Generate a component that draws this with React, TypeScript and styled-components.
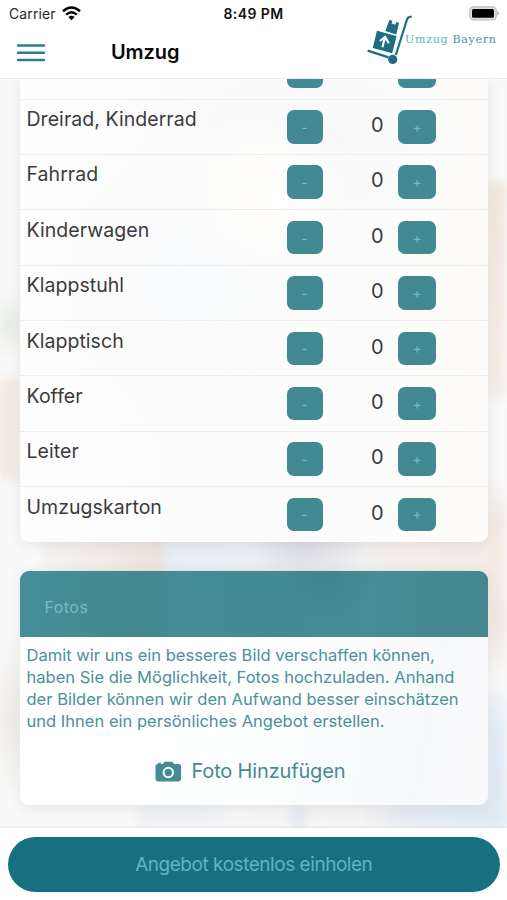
import React from "react";
import styled, { createGlobalStyle } from "styled-components";

const GlobalStyle = createGlobalStyle`
  * { box-sizing: border-box; }
  html, body { margin: 0; padding: 0; }
  body { font-family: Inter, "Liberation Sans", sans-serif; background: #fff; overflow: hidden; }
  button { font-family: inherit; border: 0; padding: 0; margin: 0; cursor: pointer; }
`;

const Screen = styled.div`
  width: 507px;
  height: 900px;
  display: flex;
  flex-direction: column;
  overflow: hidden;
  background: #fff;
`;

const Header = styled.header`
  height: 79px;
  flex: none;
  display: grid;
  grid-template-columns: 1fr auto;
  grid-template-rows: 27px 51px;
  border-bottom: 1px solid #ececec;
  background: #fff;
  position: relative;
  z-index: 1;
`;

const StatusBar = styled.div`
  grid-column: 1 / -1;
  display: grid;
  grid-template-columns: 1fr auto 1fr;
  align-items: center;
  padding: 0 7px 0 9px;
  color: #111;
`;

const Carrier = styled.div`
  display: flex;
  align-items: center;
  gap: 6px;
  font-size: 14px;
  letter-spacing: 0.1px;
  color: #2b2b2b;
`;

const Clock = styled.div`
  margin-left: -2px;
  font-size: 14px;
  font-weight: 600;
  letter-spacing: 0.4px;
`;

const BatterySlot = styled.div`
  display: flex;
  justify-content: flex-end;
`;

const NavLeft = styled.div`
  display: flex;
  align-items: center;
  padding-left: 16px;
`;

const MenuButton = styled.button`
  display: flex;
  background: none;
`;

const Title = styled.h1`
  margin: 0 0 2px 65px;
  font-size: 20px;
  font-weight: 600;
  letter-spacing: -0.1px;
  color: #080808;
`;

const Brand = styled.div`
  display: flex;
  align-items: flex-start;
  width: 141px;
  margin-top: -17px;
`;

const BrandMark = styled.svg`
  flex: none;
`;

const BrandName = styled.div`
  margin: 23px 0 0 -9px;
  font-family: "DejaVu Serif", serif;
  font-size: 11px;
  letter-spacing: 0.72px;
  white-space: nowrap;
  color: #4596a3;
`;

const BrandAccent = styled.span`
  color: #55b9d0;
`;

const Content = styled.main`
  flex: 1;
  min-height: 0;
  overflow: hidden;
  padding: 0 20px;
  position: relative;
  isolation: isolate;
  background: #f9f9f9;

  &::before {
    content: "";
    position: absolute;
    inset: 0;
    z-index: -1;
    filter: blur(4px);
    background:
      radial-gradient(ellipse 40px 34px at 0px 246px, rgba(222, 231, 214, 0.7) 0 5%, transparent),
      linear-gradient(90deg, #f2e6dc, #f5efea) 0 299px / 21px 102px no-repeat,
      linear-gradient(180deg, #f1e8df, #f5eee8) 487px 103px / 20px 215px no-repeat,
      radial-gradient(ellipse 62px 52px at 305px 462px, #dcdce3 10%, transparent),
      linear-gradient(90deg, #f5f3f1, #f2ebe6 50%, #eee2dc 95%) 42px 455px / 122px 67px no-repeat,
      linear-gradient(100deg, #e5edf4, #f0f1f5 45%, #f4ede8 75%, #f5ebe5) 164px 455px / 343px 67px no-repeat,
      linear-gradient(180deg, transparent, #f3e9e4 20%, #f2e8e3 75%, transparent) 487px 400px / 20px 200px no-repeat,
      linear-gradient(180deg, transparent, #e2ebf4 35%, #dfeaf3) 487px 600px / 20px 149px no-repeat,
      radial-gradient(ellipse 12px 30px at 299px 742px, #dfe6f0 20%, transparent),
      linear-gradient(90deg, #eef0f4, #f1f3f6 22%, #f7f6f5 25%, #f6f4f3 60%, #e7eaf0 70%, #dfeaf2) 138px 722px / 369px 40px no-repeat,
      linear-gradient(180deg, transparent, #edebe7 50%, transparent) 0 565px / 21px 150px no-repeat;
  }
`;

const cardShadow = "0 2px 14px rgba(80, 80, 80, 0.12)";

const ItemCard = styled.section`
  width: 467.5px;
  height: 463px;
  overflow: hidden;
  border-radius: 0 0 9px 9px;
  box-shadow: ${cardShadow};
  background:
    radial-gradient(ellipse 90px 85px at 245px 110px, rgba(255, 254, 252, 1) 30%, transparent),
    radial-gradient(ellipse 160px 110px at 285px 60px, rgba(249, 249, 250, 1) 20%, transparent),
    radial-gradient(ellipse 170px 170px at 180px 200px, rgba(250, 251, 252, 0.9) 10%, transparent),
    linear-gradient(90deg, #fdfdfd, #fcfcfc 45%, #fdfcfb);
`;

const ItemRow = styled.div<{ $cut?: boolean }>`
  height: ${(p) => (p.$cut ? "20.5px" : "55.4px")};
  display: grid;
  grid-template-columns: 260px 36px 1fr 38px 51.5px;
  align-items: ${(p) => (p.$cut ? "end" : "start")};
  align-content: ${(p) => (p.$cut ? "end" : "start")};
  padding: ${(p) => (p.$cut ? "0 0 10.5px 6.5px" : "10.5px 0 0 6.5px")};
  border-bottom: 1px solid #eeeeee;
  &:last-child { border-bottom: 0; }
`;

const ItemName = styled.span`
  margin-top: -4px;
  font-size: 19.5px;
  line-height: 26px;
  letter-spacing: 0.05px;
  color: #3b3b3b;
`;

const Count = styled.span`
  padding-right: 14.5px;
  text-align: right;
  font-size: 20px;
  line-height: 31px;
  color: #3b3b3b;
`;

const StepButton = styled.button`
  height: 33.5px;
  border-radius: 7px;
  background: #428994;
  color: #74b8c4;
  font-size: 13px;
  font-weight: 500;
  line-height: 32px;
`;

const PhotoCard = styled.section`
  width: 467.5px;
  height: 234px;
  margin-top: 29px;
  overflow: hidden;
  border-radius: 9px;
  box-shadow: ${cardShadow};
  background: linear-gradient(100deg, #fefefe, #fdfefe 50%, #f8f9fb 85%, #fafafb);
  color: #4b919a;
`;

const PhotoHeader = styled.h2`
  height: 66px;
  margin: 0;
  display: flex;
  align-items: center;
  padding: 5px 0 0 24.5px;
  font-size: 16px;
  font-weight: 400;
  letter-spacing: 0.45px;
  color: #78b9c5;
  background:
    radial-gradient(ellipse 50px 50px at 305px 0, rgba(63, 130, 142, 0.8) 20%, transparent),
    linear-gradient(90deg, #458e98, #43888f 27%, #448d98 34%, #428b96 55%, #468d97 75%, #44878f);
`;

const PhotoText = styled.p`
  margin: 6.5px 0 0 6.5px;
  font-size: 16.5px;
  line-height: 22px;
  letter-spacing: 0.02px;
  white-space: nowrap;
`;

const AddPhoto = styled.button`
  display: flex;
  align-items: center;
  gap: 10px;
  margin: 26.5px 0 0 134.5px;
  background: none;
  color: #438b95;
  font-size: 20px;
  line-height: 26px;
  letter-spacing: -0.17px;
`;

const Footer = styled.footer`
  flex: none;
  height: 72px;
  padding: 9px 7.5px 0 8px;
  background: #fff;
  box-shadow: 0 -1px 2px rgba(0, 0, 0, 0.08);
  position: relative;
  z-index: 1;
`;

const SubmitButton = styled.button`
  width: 100%;
  height: 54.5px;
  border-radius: 28px;
  background: #17707f;
  color: #5eb4c6;
  font-size: 19px;
  letter-spacing: -0.46px;
`;

const MenuIcon = () => (
  <svg width="30" height="20" viewBox="0 0 30 20">
    <path d="M2 2.5 H28 M2 9.8 H28 M2 17.1 H28" stroke="#2b7f8a" strokeWidth="2.5" strokeLinecap="round" />
  </svg>
);

const Wifi = () => (
  <svg width="19" height="15" viewBox="0 0 19 15">
    <g fill="none" stroke="#000" strokeWidth="2.5">
      <path d="M1 5.2 Q9.5 -2.3 18 5.2" />
      <path d="M4.2 8.6 Q9.5 4 14.8 8.6" />
    </g>
    <path d="M6.4 10.9 Q9.5 8.5 12.6 10.9 L9.5 14.2Z" />
  </svg>
);

const Battery = () => (
  <svg width="31" height="15" viewBox="0 0 31 15">
    <rect x="0.8" y="0.8" width="26.4" height="13" rx="3.6" fill="#e0e0e0" stroke="#bdbdbd" strokeWidth="1.2" />
    <rect x="3" y="3" width="22" height="8.8" rx="1.5" fill="#000" />
    <path d="M28.3 4.8 Q31.4 7.3 28.3 9.8Z" fill="#a8a8a8" />
  </svg>
);

const HandTruck = () => (
  <BrandMark width="48" height="56" viewBox="0 0 48 56">
    <g fill="#1c6f80">
      <path d="M10.9 20.8 L30.6 26 L26.2 43.2 L6.8 37.9Z" />
      <path d="M23.3 9.9 L26.4 10.8 L25.6 13.6 L29.3 14.7 L30.2 12 L33.1 12.8 L30.3 24.4 L19.3 21Z" />
      <circle cx="26.7" cy="49.4" r="4.6" />
    </g>
    <path d="M45.7 6.8 Q42.2 6.3 41 9.5 L29.8 45" fill="none" stroke="#1c6f80" strokeWidth="2.2" />
    <path d="M1.6 40.7 L22.5 47.4" stroke="#1c6f80" strokeWidth="2.3" />
    <path d="M16.4 37.2 L19 27 M13.9 31 L19.1 27 L22.8 33.2" fill="none" stroke="#fff" strokeWidth="2.2" />
  </BrandMark>
);

const Camera = () => (
  <svg width="27" height="21" viewBox="0 0 27 21">
    <path fill="#438b95" d="M3 3 V2 H6 V3 H8 L9.5 0.8 H17.5 L19 3 H23.5 Q26 3 26 5.5 V18 Q26 20.4 23.5 20.4 H3 Q0.5 20.4 0.5 18 V5.5 Q0.5 3 3 3Z" />
    <circle cx="13.3" cy="11.5" r="4.7" fill="none" stroke="#fff" strokeWidth="2" />
  </svg>
);

const items = ["Dreirad, Kinderrad", "Fahrrad", "Kinderwagen", "Klappstuhl", "Klapptisch", "Koffer", "Leiter", "Umzugskarton"];

export default function App() {
  return (
    <>
      <GlobalStyle />
      <Screen>
        <Header>
          <StatusBar>
            <Carrier>Carrier <Wifi /></Carrier>
            <Clock>8:49 PM</Clock>
            <BatterySlot><Battery /></BatterySlot>
          </StatusBar>
          <NavLeft>
            <MenuButton aria-label="Menü"><MenuIcon /></MenuButton>
            <Title>Umzug</Title>
          </NavLeft>
          <Brand>
            <HandTruck />
            <BrandName><BrandAccent>Umzug</BrandAccent> Bayern</BrandName>
          </Brand>
        </Header>
        <Content>
          <ItemCard>
            <ItemRow $cut>
              <span /><StepButton /><span /><StepButton />
            </ItemRow>
            {items.map((name) => (
              <ItemRow key={name}>
                <ItemName>{name}</ItemName>
                <StepButton>-</StepButton>
                <Count>0</Count>
                <StepButton>+</StepButton>
              </ItemRow>
            ))}
          </ItemCard>
          <PhotoCard>
            <PhotoHeader>Fotos</PhotoHeader>
            <PhotoText>
              Damit wir uns ein besseres Bild verschaffen können,<br />
              haben Sie die Möglichkeit, Fotos hochzuladen. Anhand<br />
              der Bilder können wir den Aufwand besser einschätzen<br />
              und Ihnen ein persönliches Angebot erstellen.
            </PhotoText>
            <AddPhoto><Camera />Foto Hinzufügen</AddPhoto>
          </PhotoCard>
        </Content>
        <Footer>
          <SubmitButton>Angebot kostenlos einholen</SubmitButton>
        </Footer>
      </Screen>
    </>
  );
}
